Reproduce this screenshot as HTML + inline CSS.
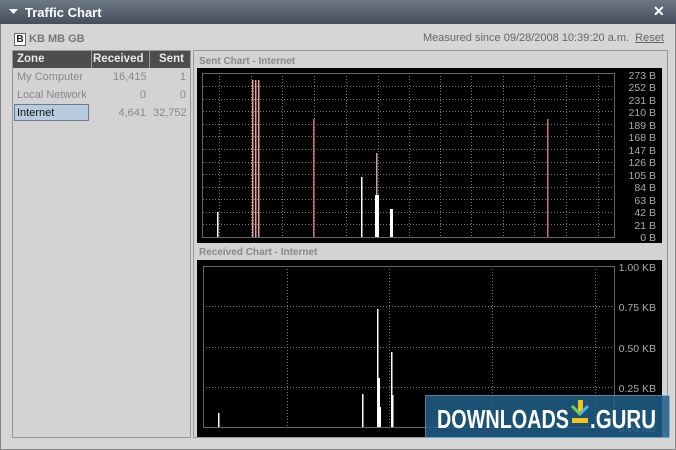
<!DOCTYPE html>
<html><head><meta charset="utf-8"><style>
*{margin:0;padding:0;box-sizing:border-box}
body{width:676px;height:450px;overflow:hidden;background:#d4d4d4;font-family:"Liberation Sans",sans-serif;position:relative}
.title{position:absolute;left:0;top:0;width:676px;height:24px;background:linear-gradient(#6d7886,#454e5b);color:#fff;font-weight:bold;font-size:13px}
.win{position:absolute;left:0;top:24px;width:676px;height:426px;background:#d6d6d6;border:1px solid #888;border-top:none}
.abs{position:absolute}
</style></head><body>
<div class="title">
 <svg class="abs" style="left:9px;top:9px" width="9" height="6"><path d="M0 0H9L4.5 5Z" fill="#fff"/></svg>
 <div class="abs" style="left:25px;top:5px">Traffic Chart</div>
 <div class="abs" style="left:653px;top:3px;font-size:14px">✕</div>
</div>
<div class="win">
 <div class="abs" style="left:13px;top:9px;width:12px;height:13px;border:1px solid #666;background:#fff;font-size:10px;font-weight:bold;text-align:center;line-height:11px;color:#222">B</div>
 <div class="abs" style="left:28px;top:9px;font-size:11px;font-weight:bold;color:#777">KB MB GB</div>
 <div class="abs" style="left:422px;top:8px;font-size:11px;color:#666">Measured since 09/28/2008 10:39:20 a.m. <span style="text-decoration:underline;margin-left:3px">Reset</span></div>
 <div class="abs" style="left:11px;top:26px;width:179px;height:388px;border:1px solid #999;background:#d3d3d3">
  <div class="abs" style="left:0;top:0;width:177px;height:17px;background:#4d4d4d;color:#e8e8e8;font-weight:bold;font-size:11.5px">
   <span class="abs" style="left:4px;top:2px">Zone</span>
   <span class="abs" style="left:78px;top:0;width:1px;height:17px;background:#999"></span>
   <span class="abs" style="left:80px;top:2px">Received</span>
   <span class="abs" style="left:136px;top:0;width:1px;height:17px;background:#999"></span>
   <span class="abs" style="left:146px;top:2px">Sent</span>
  </div>
  <div class="abs" style="left:4px;top:20px;font-size:11px;color:#888">My Computer</div>
  <div class="abs" style="left:100px;top:20px;font-size:11px;color:#888;width:33px;text-align:right">16,415</div>
  <div class="abs" style="left:140px;top:20px;font-size:11px;color:#888;width:33px;text-align:right">1</div>
  <div class="abs" style="left:4px;top:38px;font-size:11px;color:#888">Local Network</div>
  <div class="abs" style="left:100px;top:38px;font-size:11px;color:#888;width:33px;text-align:right">0</div>
  <div class="abs" style="left:140px;top:38px;font-size:11px;color:#888;width:33px;text-align:right">0</div>
  <div class="abs" style="left:1px;top:53px;width:75px;height:17px;background:#b8cce0;border:1px solid #6a7a90;font-size:11px;color:#111;padding:2px 0 0 2px">Internet</div>
  <div class="abs" style="left:100px;top:56px;font-size:11px;color:#888;width:33px;text-align:right">4,641</div>
  <div class="abs" style="left:140px;top:56px;font-size:11px;color:#888;width:33px;text-align:right">32,752</div>
 </div>
 <div class="abs" style="left:192px;top:26px;width:475px;height:388px;border:1px solid #999;background:#d3d3d3">
  <div class="abs" style="left:5px;top:5px;font-size:10px;font-weight:bold;color:#888">Sent Chart - Internet</div>
  <div class="abs" style="left:5px;top:196px;font-size:10px;font-weight:bold;color:#888">Received Chart - Internet</div>
 </div>
</div>
<svg class="abs" style="left:0;top:0" width="676" height="450" font-family="Liberation Sans" font-size="10.5" fill="#aaa">
 <rect x="197" y="68" width="465" height="175" fill="#000"/>
 <rect x="197" y="260" width="465" height="177" fill="#000"/>
 <g stroke="#777" stroke-dasharray="1,2" stroke-width="1">
  <path d="M219.5 73V237M251.5 73V237M282.5 73V237M314.5 73V237M346.5 73V237M378.5 73V237M409.5 73V237M440.5 73V237M471.5 73V237M503.5 73V237M534.5 73V237M566.5 73V237M598.5 73V237"/>
  <path d="M203 86.5H615M203 99.5H615M203 111.5H615M203 124.5H615M203 136.5H615M203 149.5H615M203 162.5H615M203 174.5H615M203 187.5H615M203 199.5H615M203 212.5H615M203 224.5H615"/>
  <path d="M287.5 266V427M389.5 266V427M492.5 266V427M595.5 266V427M203 306.5H615M203 347.5H615M203 387.5H615"/>
 </g>
 <rect x="202.5" y="73.5" width="412" height="164" fill="none" stroke="#666"/>
 <rect x="203.5" y="266.5" width="411" height="161" fill="none" stroke="#666"/>
 <g text-anchor="end">
  <text x="656" y="79">273 B</text><text x="656" y="91">252 B</text><text x="656" y="104">231 B</text><text x="656" y="116">210 B</text><text x="656" y="129">189 B</text><text x="656" y="141">168 B</text><text x="656" y="154">147 B</text><text x="656" y="166">126 B</text><text x="656" y="179">105 B</text><text x="656" y="191">84 B</text><text x="656" y="204">63 B</text><text x="656" y="216">42 B</text><text x="656" y="229">21 B</text><text x="656" y="241">0 B</text>
  <text x="656" y="271">1.00 KB</text><text x="656" y="311">0.75 KB</text><text x="656" y="352">0.50 KB</text><text x="656" y="392">0.25 KB</text><text x="656" y="432">0.00 KB</text>
 </g>
 <g fill="#fff">
  <rect x="217" y="212" width="1.5" height="25"/>
  <rect x="252" y="80" width="1.5" height="157" fill="#e9a0a0"/><rect x="255" y="80" width="1.5" height="157" fill="#e9a0a0"/><rect x="258" y="80" width="1.5" height="157" fill="#e9a0a0"/>
  <rect x="313" y="119" width="1.5" height="118" fill="#d07070"/>
  <rect x="361" y="177" width="1.5" height="60"/>
  <rect x="376" y="153" width="1.5" height="84" fill="#c8a0a0"/>
  <rect x="375" y="195" width="4" height="42"/>
  <rect x="390" y="209" width="3" height="28"/>
  <rect x="547" y="119" width="1.5" height="118" fill="#d07070"/>
  <rect x="218" y="413" width="1.5" height="14"/>
  <rect x="362" y="394" width="1.5" height="33"/>
  <rect x="377" y="309" width="1.5" height="118"/>
  <rect x="378" y="378" width="2" height="49"/>
  <rect x="379" y="407" width="2" height="20"/>
  <rect x="391" y="352" width="1.5" height="75"/>
  <rect x="392" y="395" width="1.5" height="32"/>
 </g>
 <rect x="425.5" y="395.5" width="244" height="42" fill="#1f5f8a" fill-opacity="0.85" stroke="#7fb8de" stroke-opacity="0.6"/>
 <text x="437" y="428" font-size="26" font-weight="bold" fill="#fff" textLength="132" lengthAdjust="spacingAndGlyphs">DOWNLOADS</text>
 <rect x="578" y="400" width="5" height="12" fill="#f5c518"/>
 <path d="M572 406L580 414L588 406" fill="none" stroke="#4bd" stroke-width="3"/>
 <path d="M572 406L580 414" stroke="#7c4" stroke-width="3"/>
 <rect x="572" y="418" width="16" height="5" fill="#f5c518"/>
 <text x="590" y="428" font-size="26" font-weight="bold" fill="#fff" textLength="66" lengthAdjust="spacingAndGlyphs">.GURU</text>
</svg>
</body></html>
